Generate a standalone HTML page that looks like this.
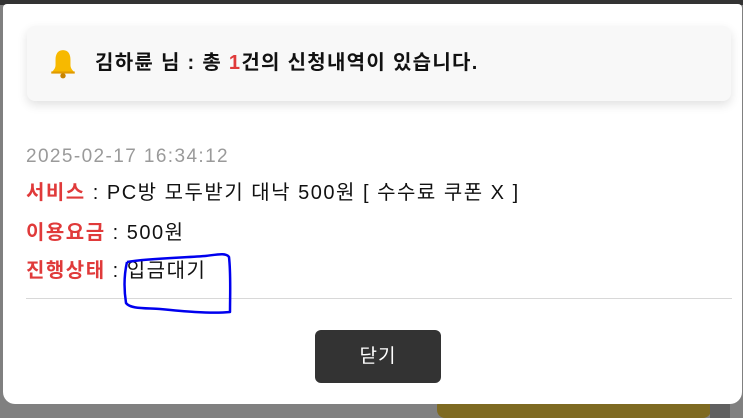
<!DOCTYPE html>
<html><head><meta charset="utf-8"><style>
body{margin:0;width:743px;height:412px;background:#808080;position:relative;overflow:hidden;font-family:"Liberation Sans","Noto Sans CJK KR",sans-serif;}
.top{position:absolute;left:0;top:0;width:743px;height:5px;background:#333;}
.gold{position:absolute;left:437px;top:398px;width:274px;height:20px;background:#7e6a22;border-radius:8px;}
.dk{position:absolute;left:710px;top:398px;width:20px;height:20px;background:#606060;}
.modal{position:absolute;left:3px;top:4px;width:739px;height:400px;background:#fff;border-radius:4px 4px 12px 12px;}
.card{position:absolute;left:24px;top:22px;width:704px;height:75px;background:#f8f8f8;border-radius:8px;box-shadow:0 4px 10px rgba(0,0,0,.12);}
.card .t{position:absolute;left:68px;top:25px;font-size:20px;letter-spacing:1.3px;font-weight:bold;color:#111;line-height:24px;}
.bell{position:absolute;left:21px;top:22px;}
.row{position:absolute;left:23px;font-size:20px;letter-spacing:1.5px;color:#111;line-height:24px;white-space:nowrap;}
.r{color:#e03a3a;font-weight:bold;}
.hr{position:absolute;left:23px;top:294px;width:706px;height:1px;background:#d8d8d8;}
.btn{position:absolute;left:312px;top:326px;width:126px;height:53px;background:#333;border-radius:6px;color:#fff;font-size:19px;text-align:center;line-height:53px;letter-spacing:1px;}
</style></head><body>
<div class="top"></div><div class="gold"></div><div class="dk"></div>
<div class="modal">
<div class="card">
<svg class="bell" width="30" height="32" viewBox="0 0 28 30"><path d="M14 2c-5 0-7 4-7 9v5c0 3-2 5-4 7h22c-2-2-4-4-4-7v-5c0-5-2-9-7-9z" fill="#f7b900"/><rect x="3" y="22" width="22" height="2" fill="#e09a00"/><circle cx="14" cy="26" r="2.5" fill="#c88400"/></svg>
<div class="t">김하륜 님 : 총 <span style="color:#e03a3a">1</span>건의 신청내역이 있습니다.</div>
</div>
<div class="row" style="top:141px;color:#9a9a9a;font-size:19px;letter-spacing:1.4px">2025-02-17 16:34:12</div>
<div class="row" style="top:177px"><span class="r">서비스</span> : PC방 모두받기 대낙 500원 [ 수수료 쿠폰 X ]</div>
<div class="row" style="top:217px"><span class="r">이용요금</span> : 500원</div>
<div class="row" style="top:255px"><span class="r">진행상태</span> : 입금대기</div>
<div class="hr"></div>
<div class="btn">닫기</div>
</div>
<svg style="position:absolute;left:0;top:0" width="743" height="412"><path d="M127 262 C150 258 180 258 205 256 C215 255 226 252 229 257 C231 275 230 295 230 312 C210 314 180 311 160 309 C145 308 130 309 126 303 C124 290 124 275 127 262" fill="none" stroke="#0000ee" stroke-width="2.5" stroke-linejoin="round"/></svg>
</body></html>
